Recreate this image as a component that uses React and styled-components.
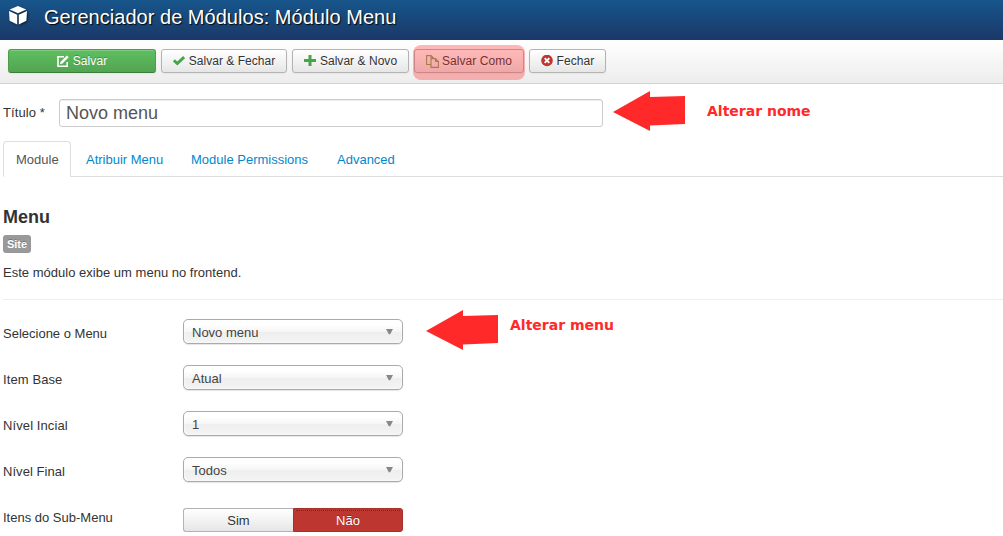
import React from "react";
import styled, { createGlobalStyle, css } from "styled-components";

const Global = createGlobalStyle`
  *, *::before, *::after { box-sizing: border-box; }
  body { margin: 0; background: #fff; color: #333; font: 13px/18px "Liberation Sans", Arial, sans-serif; overflow: hidden; }
`;

const Page = styled.div`width: 1003px; height: 536px; overflow: hidden;`;

const Header = styled.header`
  display: flex; align-items: flex-start; height: 40px; padding: 5px 0 0 8px;
  background: linear-gradient(#17568c, #1a3867);
  svg { filter: drop-shadow(1px 1px 1px rgba(0,0,0,.6)); }
`;
const HeaderTitle = styled.h1`
  margin: 0 0 0 16px; font-size: 20px; line-height: 24px; font-weight: 400; color: #fff;
  letter-spacing: 0.03px; white-space: nowrap;
  text-shadow: 1px 1px 1px rgba(0,0,0,.9);
`;

const Toolbar = styled.div`
  display: flex; gap: 5px; height: 44px; padding: 9px 8px 0;
  background: linear-gradient(#fff, #ededed); border-bottom: 1px solid #d3d3d3;
`;
const ToolButton = styled.button`
  position: relative; display: flex; align-items: center; justify-content: center; gap: ${p => p.$gap || 4}px;
  flex: none; width: ${p => p.$w}px; height: 24px; padding: 0;
  font: 12px/18px "Liberation Sans", Arial, sans-serif; color: #333; white-space: nowrap;
  letter-spacing: ${p => p.$spacing || 0}px;
  text-shadow: 0 1px 1px rgba(255,255,255,.75);
  background: linear-gradient(#fff, #e6e6e6); border: 1px solid #b3b3b3; border-radius: 3px;
  box-shadow: inset 0 1px 0 rgba(255,255,255,.2), 0 1px 2px rgba(0,0,0,.05);
  svg { flex: none; }
  ${p => p.$primary && css`
    color: #fff; text-shadow: 0 -1px 0 rgba(0,0,0,.25);
    background: linear-gradient(#5fbf5f, #52a452); border-color: #4b9c4b #4b9c4b #3b7f3b;
  `}
`;
const Highlight = styled.span`
  position: absolute; left: -2px; top: -5px; width: 112px; height: 35px;
  border-radius: 8px; background: rgba(255,41,41,.33);
`;

const TitleRow = styled.div`display: flex; align-items: center; height: 28px; margin-top: 15px; padding-left: 3px;`;
const TitleLabel = styled.label`width: 56px; letter-spacing: 0.08px;`;
const TitleInput = styled.input`
  width: 544px; height: 28px; padding: 0 6px; border: 1px solid #ccc; border-radius: 3px;
  font: 18px/24px "Liberation Sans", Arial, sans-serif; color: #555; background: #fff;
  box-shadow: inset 0 1px 1px rgba(0,0,0,.075); outline: none;
`;
const Arrow = styled.svg`flex: none; width: 74px; height: 41px; margin-left: ${p => p.$left}px; margin-top: ${p => p.$top}px;`;
const Note = styled.strong`
  font: bold 14px/18px "DejaVu Sans", sans-serif; color: #ff2929; white-space: nowrap;
  margin-left: ${p => p.$left}px; margin-top: ${p => p.$top}px;
`;

const Tabs = styled.nav`
  display: flex; height: 36px; margin: 14px 0 0 3px; border-bottom: 1px solid #ddd;
`;
const Tab = styled.a`
  flex: none; width: ${p => p.$w}px;
  height: 36px; padding: 9px 0 0 12px; margin-right: 2px; border: 1px solid transparent; border-radius: 4px 4px 0 0;
  color: #08c; white-space: nowrap;
  ${p => p.$active && css`color: #555; background: #fff; border-color: #ddd #ddd #fff;`}
`;

const Intro = styled.section`
  margin-left: 3px; height: 123px; padding-top: 30px; border-bottom: 1px solid #eee;
`;
const IntroTitle = styled.h3`margin: 0; font-size: 18px; line-height: 20px; font-weight: 700;`;
const Label = styled.span`
  display: block; width: 28px; height: 18px; margin-top: 8px; border-radius: 3px; background: #999; color: #fff;
  font-size: 11px; line-height: 18px; font-weight: 700; text-align: center; text-shadow: 0 -1px 0 rgba(0,0,0,.25);
`;
const Description = styled.p`margin: 11px 0 0; letter-spacing: 0.015px;`;

const Fields = styled.div`padding: 19px 0 0 3px;`;
const Field = styled.div`display: flex; height: 46px;`;
const FieldLabel = styled.label`width: 180px; padding-top: 6px; letter-spacing: ${p => p.$spacing || 0}px;`;
const Select = styled.div`
  display: flex; align-items: center; justify-content: space-between; width: 220px; height: 25px; padding: 2px 9px 0 8px;
  border: 1px solid #aaa; border-radius: 5px; color: #444;
  background: linear-gradient(#fff 20%, #f6f6f6 50%, #eee 52%, #f4f4f4 100%);
  box-shadow: inset 0 0 3px #fff, 0 1px 1px rgba(0,0,0,.1);
  svg { margin-top: -2px; }
`;
const Toggle = styled.div`display: flex; width: 220px; height: 24px; margin-top: 5px;`;
const ToggleOption = styled.button`
  width: 110px; height: 24px; padding: 2px 0 0; border: 1px solid #b3b3b3; border-right: 0; border-radius: 3px 0 0 3px;
  font: 13px/20px "Liberation Sans", Arial, sans-serif; color: #333; background: linear-gradient(#fff, #e6e6e6);
  ${p => p.$on && css`
    color: #fff; background: #bd362f; border: 1px solid #a52f29; border-radius: 0 3px 3px 0;
    text-shadow: 0 -1px 0 rgba(0,0,0,.25);
    &::before { content: ""; display: block; margin: -1px 2px 0; border-top: 1px dotted #7c231f; }
  `}
`;

const RedArrow = ({ left, top }) => (
  <Arrow $left={left} $top={top} viewBox="0 0 74 41">
    <path d="M0 21 L37 0 V6 L72 5 V33 L37 34.5 V40 Z" fill="#ff2929" />
  </Arrow>
);

const Cube = () => (
  <svg width="20" height="21" viewBox="0 0 20 21" fill="#fff">
    <path d="M10 1 L18.3 4.5 L10 8.2 L1.7 4.5Z M1 6 L9.2 9.8 V19.5 L1.6 15.8Z M19 6 L10.8 9.8 V19.5 L18.4 15.8Z" />
  </svg>
);
const EditIcon = () => (
  <svg width="12" height="12" viewBox="0 0 12 12" fill="none" stroke="#fff">
    <path d="M7 1.8H1V11.2H10.2V7" strokeWidth="1.6" /><path d="M4.6 7.6L10.8 1.4" strokeWidth="2.5" /><path d="M3 9.2L3.6 6.6L5.6 8.6Z" fill="#fff" stroke="none" />
  </svg>
);
const CheckIcon = () => (
  <svg width="12" height="12" viewBox="0 0 12 12"><path d="M.9 5.4L4.3 8.6L11.1 2" fill="none" stroke="#46a546" strokeWidth="2.9" /></svg>
);
const PlusIcon = () => (
  <svg width="12" height="12" viewBox="0 0 12 12"><path d="M6 0V11M0 5.5H12" stroke="#46a546" strokeWidth="3" /></svg>
);
const CopyIcon = () => (
  <svg width="13" height="13" viewBox="0 0 13 13" fill="none" stroke="#7fa35c" strokeWidth="1.1">
    <path d="M5 9.5H.6V.6H5L7.5 3V3.6M5 .6V3.2H7.5M5 12.4V3.6H9.5L12.4 6.4V12.4ZM9.5 3.6V6.4H12.4" />
  </svg>
);
const CloseIcon = () => (
  <svg width="12" height="12" viewBox="0 0 12 12"><circle cx="6" cy="5.5" r="5.8" fill="#bd362f" /><path d="M3.7 3.2L8.3 7.8M8.3 3.2L3.7 7.8" stroke="#fff" strokeWidth="1.9" /></svg>
);
const Caret = () => (
  <svg width="7" height="6" viewBox="0 0 7 6"><path d="M0 0H7L4.2 5.2H2.8Z" fill="#888" /></svg>
);

const fields = [
  { label: "Selecione o Menu", value: "Novo menu", arrow: true },
  { label: "Item Base", value: "Atual", spacing: 0.1 },
  { label: "Nível Incial", value: "1", spacing: 0.1 },
  { label: "Nível Final", value: "Todos", spacing: 0.05 },
];

export default function App() {
  return (
    <Page>
      <Global />
      <Header><Cube /><HeaderTitle>Gerenciador de Módulos: Módulo Menu</HeaderTitle></Header>
      <Toolbar>
        <ToolButton $w={148} $primary $spacing={0.1}><EditIcon />Salvar</ToolButton>
        <ToolButton $w={126} $spacing={0.04}><CheckIcon />Salvar &amp; Fechar</ToolButton>
        <ToolButton $w={117} $spacing={0.04}><PlusIcon />Salvar &amp; Novo</ToolButton>
        <ToolButton $w={110} $gap={3} $spacing={0.08}><CopyIcon />Salvar Como<Highlight /></ToolButton>
        <ToolButton $w={77} $spacing={0.1}><CloseIcon />Fechar</ToolButton>
      </Toolbar>
      <TitleRow>
        <TitleLabel>Título *</TitleLabel>
        <TitleInput defaultValue="Novo menu" />
        <RedArrow left={10} top={-4} />
        <Note $left={20} $top={-4}>Alterar nome</Note>
      </TitleRow>
      <Tabs>
        <Tab $active $w={68}>Module</Tab><Tab $w={103}>Atribuir Menu</Tab><Tab $w={144}>Module Permissions</Tab><Tab $w={84}>Advanced</Tab>
      </Tabs>
      <Intro>
        <IntroTitle>Menu</IntroTitle>
        <Label>Site</Label>
        <Description>Este módulo exibe um menu no frontend.</Description>
      </Intro>
      <Fields>
        {fields.map(f => (
          <Field key={f.label}>
            <FieldLabel $spacing={f.spacing}>{f.label}</FieldLabel>
            <Select>{f.value}<Caret /></Select>
            {f.arrow && <><RedArrow left={23} top={-9} /><Note $left={10} $top={-3}>Alterar menu</Note></>}
          </Field>
        ))}
        <Field>
          <FieldLabel>Itens do Sub-Menu</FieldLabel>
          <Toggle><ToggleOption>Sim</ToggleOption><ToggleOption $on>Não</ToggleOption></Toggle>
        </Field>
      </Fields>
    </Page>
  );
}
